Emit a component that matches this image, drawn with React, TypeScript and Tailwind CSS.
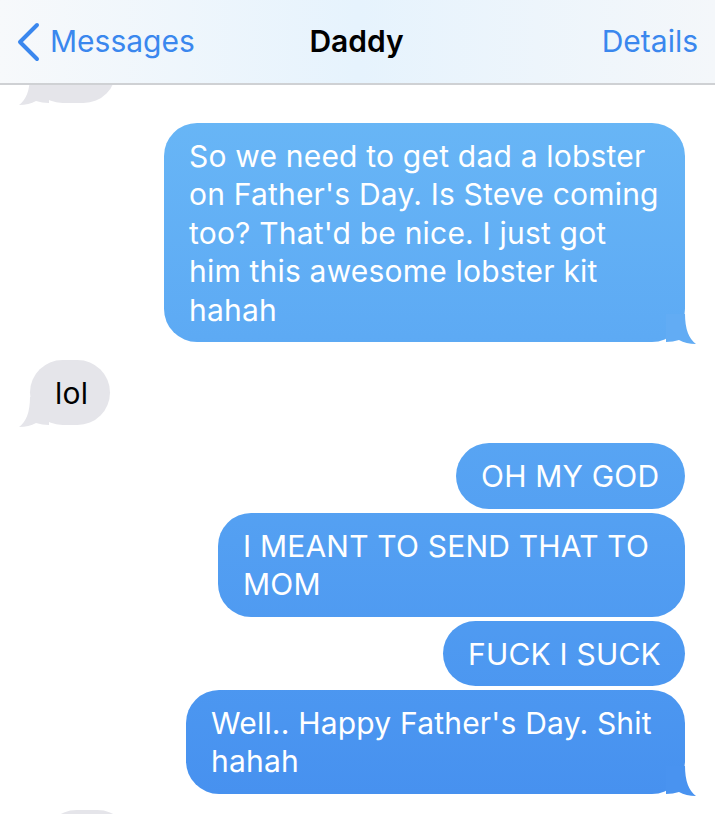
import React from 'react';

type Msg = {
  from: 'me' | 'them';
  lines: string[];
  width: string;
  tail?: boolean;
  gap: string;
  tailColor?: string;
};

const messages: Msg[] = [
  {
    from: 'me',
    lines: [
      'So we need to get dad a lobster',
      "on Father's Day. Is Steve coming",
      "too? That'd be nice. I just got",
      'him this awesome lobster kit',
      'hahah',
    ],
    width: 'w-[521px]',
    tail: true,
    gap: 'mt-[20px]',
    tailColor: '#62acf4',
  },
  { from: 'them', lines: ['lol'], width: 'w-[80px]', tail: true, gap: 'mt-[18px]' },
  { from: 'me', lines: ['OH MY GOD'], width: 'w-[229px]', gap: 'mt-[18px]' },
  { from: 'me', lines: ['I MEANT TO SEND THAT TO', 'MOM'], width: 'w-[467px]', gap: 'mt-[4px]' },
  { from: 'me', lines: ['FUCK I SUCK'], width: 'w-[242px]', gap: 'mt-[4px]' },
  {
    from: 'me',
    lines: ["Well.. Happy Father's Day. Shit", 'hahah'],
    width: 'w-[499px]',
    tail: true,
    gap: 'mt-[4px]',
    tailColor: '#4993f0',
  },
];

function RightTail({ color }: { color: string }) {
  return (
    <svg
      className="absolute -right-[11px] -bottom-[2px]"
      width="30"
      height="30"
      viewBox="0 0 30 30"
    >
      <path d="M0 0 H19 Q19 22 30 30 Q20 30 13 26 Q7 28 0 28 Z" fill={color} />
    </svg>
  );
}

function LeftTail() {
  return (
    <svg
      className="absolute -left-[11px] -bottom-[2px]"
      width="30"
      height="30"
      viewBox="0 0 30 30"
    >
      <path d="M30 0 H11 Q11 22 0 30 Q10 30 17 26 Q23 28 30 28 Z" fill="#e5e5ea" />
    </svg>
  );
}

function Bubble({ m }: { m: Msg }) {
  const mine = m.from === 'me';
  return (
    <div className={`flex ${mine ? 'justify-end pr-[30px]' : 'justify-start pl-[30px]'} ${m.gap}`}>
      <div
        className={`relative ${m.width} rounded-[33px] pl-[25px] pr-[18px] pt-[14px] pb-[13px] text-[30px] leading-[38.4px] tracking-[0.2px] whitespace-nowrap ${
          mine
            ? 'bg-fixed bg-gradient-to-b from-[#6ebcf7] to-[#4690ef] text-white'
            : 'bg-[#e5e5ea] text-black'
        }`}
      >
        {m.tail && (mine ? <RightTail color={m.tailColor ?? '#4a95f0'} /> : <LeftTail />)}
        <div className="relative">
          {m.lines.map((l, i) => (
            <div key={i}>{l}</div>
          ))}
        </div>
      </div>
    </div>
  );
}

export default function App() {
  return (
    <div
      className="h-[814px] w-[715px] overflow-hidden bg-white"
      style={{ fontFamily: 'Inter, "Liberation Sans", sans-serif' }}
    >
      {/* Nav bar */}
      <div className="relative z-10 flex h-[85px] items-center border-b-2 border-[#cfd1d4] bg-gradient-to-r from-[#f7f9fb] via-[#e6f3fd] to-[#f4f7fa] px-[15px] text-[30px]">
        <div className="flex flex-1 items-center gap-[9px] text-[#3a87ee]">
          <svg width="26" height="40" viewBox="0 0 26 40">
            <path
              d="M22 3 L5 20 L22 37"
              fill="none"
              stroke="#3a87ee"
              strokeWidth="4"
              strokeLinecap="round"
              strokeLinejoin="round"
            />
          </svg>
          <span>Messages</span>
        </div>
        <div className="font-semibold text-black">Daddy</div>
        <div className="flex flex-1 justify-end pr-[2px] text-[#3a87ee]">Details</div>
      </div>

      {/* Conversation */}
      <div className="flex flex-col">
        <div className="-mt-[47px] flex justify-start pl-[30px]">
          <div className="relative h-[65px] w-[86px] rounded-[33px] bg-[#e5e5ea]">
            <LeftTail />
          </div>
        </div>
        {messages.map((m, i) => (
          <Bubble key={i} m={m} />
        ))}
        <div className="mt-[16px] flex justify-start pl-[44px]">
          <div className="h-[65px] w-[86px] rounded-[33px] bg-[#e5e5ea]" />
        </div>
      </div>
    </div>
  );
}
